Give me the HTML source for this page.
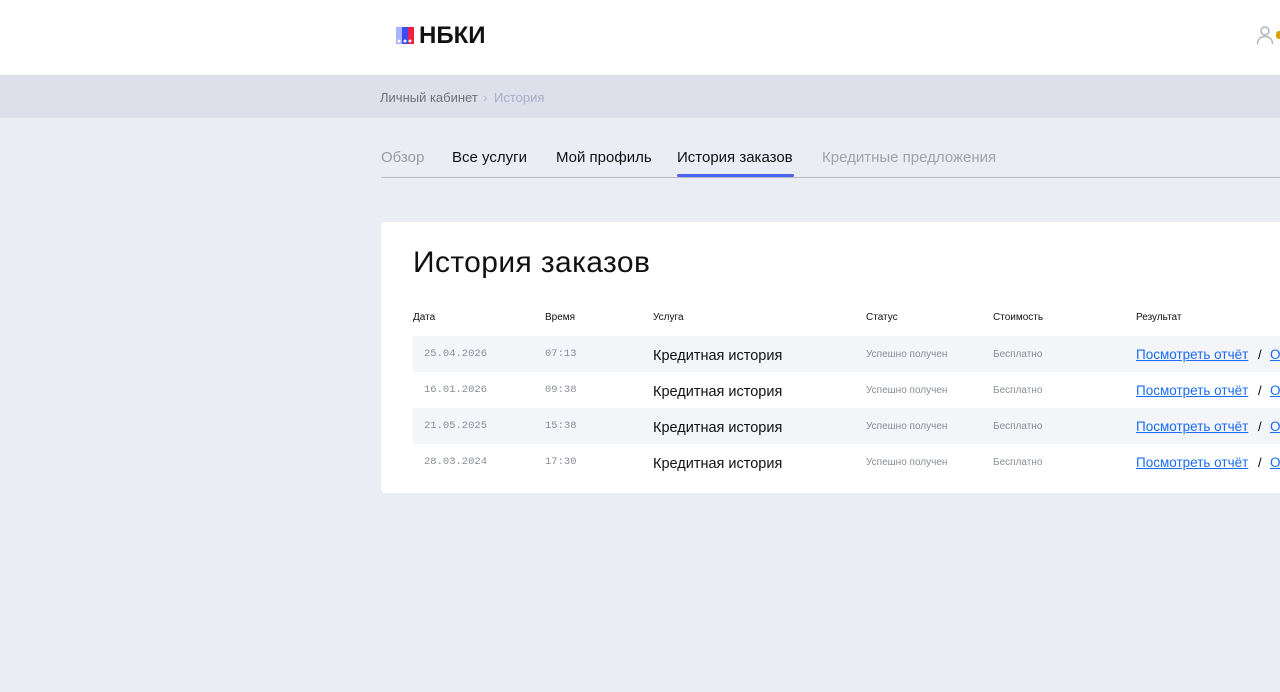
<!DOCTYPE html>
<html><head><meta charset="utf-8"><style>
*{margin:0;padding:0;box-sizing:border-box}
body{width:1280px;height:692px;overflow:hidden;background:#eaedf4;font-family:"Liberation Sans",sans-serif;position:relative}
.hdr{position:absolute;left:0;top:0;width:1280px;height:75px;background:#fff}
.logo{position:absolute;left:396px;top:22px;font-size:24px;font-weight:bold;color:#111;letter-spacing:0}
.bc{position:absolute;top:75px;left:0;width:1280px;height:43px;background:#dde0ea}
.bc span{position:absolute;top:15px;font-size:13px}
.tabs a{position:absolute;top:149px;font-size:15px;color:#111;text-decoration:none}
.line{position:absolute;left:381px;top:177px;width:899px;height:1px;background:#b8bbc6}
.act{position:absolute;left:677px;top:174px;width:117px;height:3px;background:#4b63f5;border-radius:2px}
.card{position:absolute;left:381px;top:222px;width:920px;height:271px;background:#fff;border-radius:4px}
h1{position:absolute;left:413px;top:246px;font-size:30px;font-weight:normal;color:#111;letter-spacing:0.4px}
.th{position:absolute;top:312px;font-size:10px;color:#111}
.row{position:absolute;left:413px;width:880px;height:36px}
.row span{position:absolute}
.m{font-family:"Liberation Mono",monospace;font-size:10.5px;color:#8a8d96;top:12px}
.s{font-size:10px;color:#8a8d96;top:13px}
.k{font-size:14.5px;color:#111;top:12px}
.l{font-size:13.5px;color:#1a6cf0;text-decoration:underline;top:11px}
</style></head><body>
<div class="hdr">
<svg style="position:absolute;left:396px;top:27px" width="18" height="17" viewBox="0 0 18 17"><rect x="0" y="0" width="6" height="17" fill="#a9b4ff"/><rect x="6" y="0" width="6" height="17" fill="#3b4df0"/><rect x="12" y="0" width="6" height="17" fill="#f02040"/><circle cx="9" cy="14" r="1.5" fill="#fff"/><circle cx="14" cy="14" r="1.5" fill="#fff"/><circle cx="3" cy="14" r="1.5" fill="#fff"/></svg>
<div class="logo" style="left:419px">НБКИ</div>
<svg style="position:absolute;left:1256px;top:25px" width="18" height="20" viewBox="0 0 18 20" fill="none" stroke="#b0b3be" stroke-width="1.5"><circle cx="9" cy="6" r="4"/><path d="M1.5 19c0-5 3.5-7.5 7.5-7.5s7.5 2.5 7.5 7.5"/></svg>
<div style="position:absolute;left:1276px;top:31px;width:6px;height:8px;border-radius:3px;background:#d9a000"></div>
</div>
<div class="bc"><span style="left:380px;color:#6e717c">Личный кабинет</span><span style="left:483px;color:#b0b3c0">›</span><span style="left:494px;color:#a8aec8">История</span></div>
<div class="tabs">
<a style="left:381px;color:#999ca6">Обзор</a>
<a style="left:452px">Все услуги</a>
<a style="left:556px">Мой профиль</a>
<a style="left:677px">История заказов</a>
<a style="left:822px;color:#a0a3ad">Кредитные предложения</a>
</div>
<div class="line"></div><div class="act"></div>
<div class="card"></div>
<h1>История заказов</h1>
<span class="th" style="left:413px">Дата</span>
<span class="th" style="left:545px">Время</span>
<span class="th" style="left:653px">Услуга</span>
<span class="th" style="left:866px">Статус</span>
<span class="th" style="left:993px">Стоимость</span>
<span class="th" style="left:1136px">Результат</span>

<div class="row" style="top:336px;background:#f4f5f8"><span class="m" style="left:11px">25.04.2026</span><span class="m" style="left:132px">07:13</span><span class="k" style="left:240px">Кредитная история</span><span class="s" style="left:453px">Успешно получен</span><span class="s" style="left:580px">Бесплатно</span><span class="l" style="left:723px">Посмотреть отчёт </span><span style="left:845px;top:11px;font-size:13px">/</span><span class="l" style="left:857px">О</span></div>
<div class="row" style="top:372px"><span class="m" style="left:11px">16.01.2026</span><span class="m" style="left:132px">09:38</span><span class="k" style="left:240px">Кредитная история</span><span class="s" style="left:453px">Успешно получен</span><span class="s" style="left:580px">Бесплатно</span><span class="l" style="left:723px">Посмотреть отчёт </span><span style="left:845px;top:11px;font-size:13px">/</span><span class="l" style="left:857px">О</span></div>
<div class="row" style="top:408px;background:#f4f5f8"><span class="m" style="left:11px">21.05.2025</span><span class="m" style="left:132px">15:38</span><span class="k" style="left:240px">Кредитная история</span><span class="s" style="left:453px">Успешно получен</span><span class="s" style="left:580px">Бесплатно</span><span class="l" style="left:723px">Посмотреть отчёт </span><span style="left:845px;top:11px;font-size:13px">/</span><span class="l" style="left:857px">О</span></div>
<div class="row" style="top:444px"><span class="m" style="left:11px">28.03.2024</span><span class="m" style="left:132px">17:30</span><span class="k" style="left:240px">Кредитная история</span><span class="s" style="left:453px">Успешно получен</span><span class="s" style="left:580px">Бесплатно</span><span class="l" style="left:723px">Посмотреть отчёт </span><span style="left:845px;top:11px;font-size:13px">/</span><span class="l" style="left:857px">О</span></div>
</body></html>
